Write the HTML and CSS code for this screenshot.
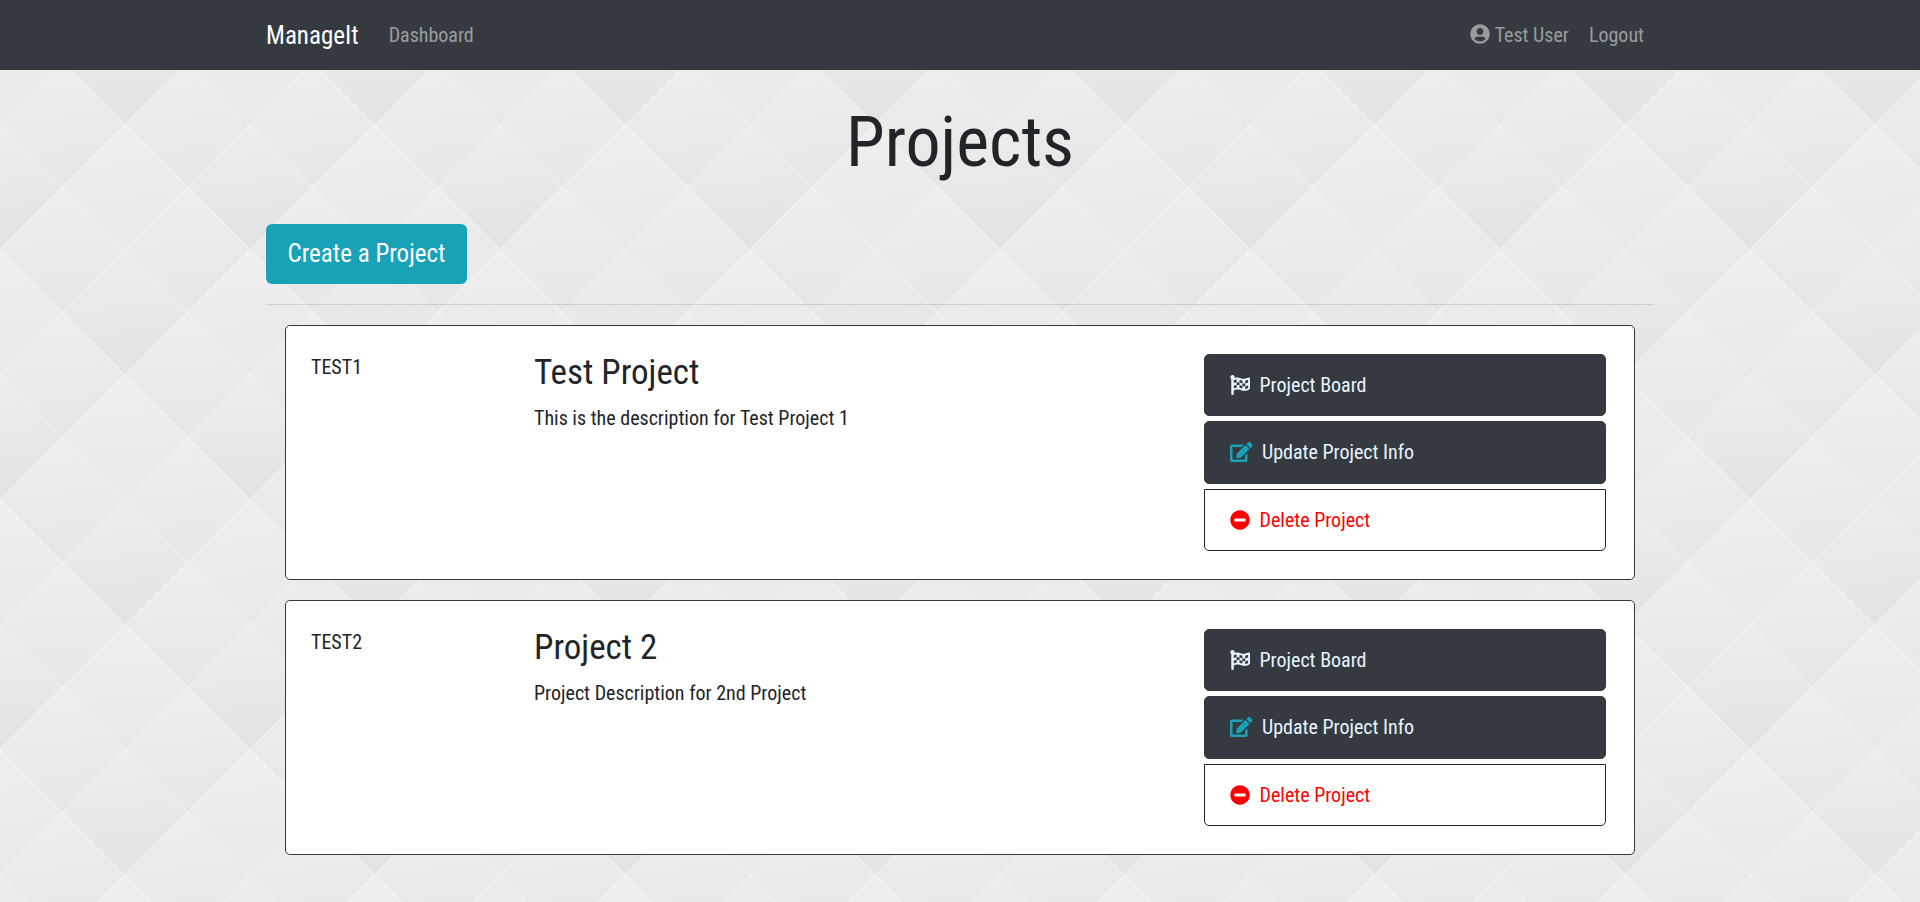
FILE: index.html
```html
<!DOCTYPE html>
<html lang="en">
<head>
<meta charset="utf-8">
<title>ManageIt</title>
<link rel="stylesheet" href="styles.css">
</head>
<body>
<svg class="backdrop" aria-hidden="true">
  <defs>
    <linearGradient id="g1" x1=".45" y1="0" x2=".55" y2="1"><stop offset="0" stop-color="#f0eeee"/><stop offset="1" stop-color="#e8e8e8"/></linearGradient>
    <linearGradient id="g2" x1=".45" y1="0" x2=".55" y2="1"><stop offset="0" stop-color="#eeeeee"/><stop offset="1" stop-color="#e6e6e6"/></linearGradient>
    <linearGradient id="g3" x1=".45" y1="0" x2=".55" y2="1"><stop offset="0" stop-color="#ededed"/><stop offset="1" stop-color="#e3e3e3"/></linearGradient>
    <g id="diamond">
      <path fill="url(#g1)" d="M125 0l62.500 62.500L125 125 62.500 62.500z"/>
      <path fill="url(#g2)" d="M62.500 62.500L125 125l-62.500 62.500L0 125z"/>
      <path fill="url(#g2)" d="M187.500 62.500L250 125l-62.500 62.500L125 125z"/>
      <path fill="url(#g3)" d="M125 125l62.500 62.500L125 250l-62.500-62.500z"/>
      <path class="minor" d="M62.500 62.500l125 125M187.500 62.500l-125 125"/>
      <path class="major" d="M125 0l125 125L125 250 0 125z"/>
    </g>
    <pattern id="tile" width="250" height="250" patternUnits="userSpaceOnUse">
      <use href="#diamond" x="-125" y="0"/><use href="#diamond" x="125" y="0"/>
      <use href="#diamond" x="0" y="-125"/><use href="#diamond" x="0" y="125"/>
    </pattern>
    <symbol id="user" viewBox="0 0 496 512"><path d="M248 8C111 8 0 119 0 256s111 248 248 248 248-111 248-248S385 8 248 8zm0 96c48.600 0 88 39.400 88 88s-39.400 88-88 88-88-39.400-88-88 39.400-88 88-88zm0 344c-58.700 0-111.300-26.600-146.500-68.200 18.800-35.400 55.600-59.800 98.500-59.800 2.400 0 4.800.4 7.100 1.100 13 4.200 26.600 6.900 40.900 6.900 14.300 0 28-2.700 40.900-6.900 2.300-.7 4.700-1.100 7.100-1.100 42.900 0 79.700 24.400 98.500 59.800C359.300 421.400 306.700 448 248 448z"/></symbol>
    <symbol id="flag" viewBox="0 0 512 512"><path d="M243.200 189.900V258c26.100 5.900 49.300 15.600 73.600 22.300v-68.200c-26-5.800-49.400-15.500-73.600-22.200zm223.300-123c-34.300 15.900-76.500 31.900-117 31.900C296 98.800 251.700 64 184.300 64c-25 0-47.300 4.400-68 12 2.800-7.300 4.100-15.200 3.600-23.600C118.100 24 94.800 1.200 66.300 0 34.300-1.300 8 24.300 8 56c0 19 9.500 35.800 24 45.900V488c0 13.300 10.700 24 24 24h16c13.300 0 24-10.700 24-24v-94.400c28.300-12.100 63.600-22.100 114.400-22.100 53.600 0 97.800 34.800 165.200 34.800 48.200 0 86.700-16.300 122.500-40.900 8.700-6 13.800-15.800 13.800-26.400V95.900c.1-23.300-24.200-38.800-45.400-29zM169.600 325.500c-25.800 2.700-50 8.200-73.600 16.600v-70.500c26.200-9.300 47.500-15 73.600-17.400v71.300zM464 191c-23.600 9.800-46.300 19.500-73.600 23.900V286c24.800-3.400 51.400-11.800 73.600-26v70.500c-25.100 16.100-48.500 24.700-73.600 27.100V286c-27 3.700-47.900 1.500-73.600-5.600v67.400c-23.900-7.400-47.300-16.700-73.600-21.300V258c-19.700-4.400-40.800-6.800-73.600-3.800v-70c-22.400 3.100-44.600 10.200-73.600 20.900v-70.500c33.200-12.200 50.100-19.800 73.600-22v71.600c27-3.700 48.400-1.300 73.600 5.700v-67.400c23.700 7.400 47.200 16.700 73.600 21.300v68.400c23.700 5.300 47.600 6.900 73.600 2.700V143c27-4.800 52.300-13.600 73.600-22.500z"/></symbol>
    <symbol id="edit" viewBox="0 0 576 512"><path d="M402.600 83.200l90.200 90.200c3.800 3.800 3.800 10 0 13.800L274.400 405.600l-92.800 10.300c-12.400 1.400-22.900-9.100-21.500-21.500l10.300-92.800L388.800 83.200c3.800-3.800 10-3.800 13.800 0zm162-22.900l-48.800-48.800c-15.200-15.200-39.900-15.200-55.200 0l-35.400 35.400c-3.800 3.800-3.800 10 0 13.800l90.200 90.200c3.800 3.800 10 3.800 13.800 0l35.400-35.400c15.200-15.300 15.200-40 0-55.200zM384 346.200V448H64V128h229.800c3.200 0 6.200-1.300 8.500-3.500l40-40c7.600-7.600 2.200-20.500-8.500-20.500H48C21.500 64 0 85.500 0 112v352c0 26.500 21.500 48 48 48h352c26.500 0 48-21.500 48-48V306.200c0-10.700-12.900-16-20.500-8.500l-40 40c-2.200 2.300-3.500 5.300-3.500 8.500z"/></symbol>
    <symbol id="minus" viewBox="0 0 512 512"><path d="M256 8C119 8 8 119 8 256s111 248 248 248 248-111 248-248S393 8 256 8zM124 296c-6.600 0-12-5.400-12-12v-56c0-6.600 5.400-12 12-12h264c6.600 0 12 5.400 12 12v56c0 6.600-5.400 12-12 12H124z"/></symbol>
  </defs>
  <rect width="100%" height="100%" fill="url(#tile)"/>
</svg>
<nav class="navbar">
  <div class="container navbar-inner">
    <a class="brand">ManageIt</a>
    <a class="nav-link">Dashboard</a>
    <a class="nav-link nav-user"><svg class="icon icon-user"><use href="#user"/></svg>Test User</a>
    <a class="nav-link">Logout</a>
  </div>
</nav>
<main class="container">
  <h1 class="title">Projects</h1>
  <a class="btn-create">Create a Project</a>
  <hr class="divider">
  <div class="projects">
    <article class="card">
      <span class="code">TEST1</span>
      <div class="info"><h3>Test Project</h3><p>This is the description for Test Project 1</p></div>
      <ul class="actions">
        <li class="action"><svg class="icon"><use href="#flag"/></svg>Project Board</li>
        <li class="action update"><svg class="icon icon-edit"><use href="#edit"/></svg>Update Project Info</li>
        <li class="action delete"><svg class="icon"><use href="#minus"/></svg>Delete Project</li>
      </ul>
    </article>
    <article class="card">
      <span class="code">TEST2</span>
      <div class="info"><h3>Project 2</h3><p>Project Description for 2nd Project</p></div>
      <ul class="actions">
        <li class="action"><svg class="icon"><use href="#flag"/></svg>Project Board</li>
        <li class="action update"><svg class="icon icon-edit"><use href="#edit"/></svg>Update Project Info</li>
        <li class="action delete"><svg class="icon"><use href="#minus"/></svg>Delete Project</li>
      </ul>
    </article>
  </div>
</main>
</body>
</html>
```
FILE: styles.css
```css
* { box-sizing: border-box; }
body {
  margin: 0;
  min-height: 902px;
  background: #eaeaea;
  color: #212529;
  font: 20px/30px "Roboto Condensed", Roboto, sans-serif;
  font-stretch: 75%;
}
.backdrop { position: absolute; inset: 0; width: 100%; height: 902px; z-index: -1; }
.minor, .major { fill: none; stroke: #fff; }
.minor { stroke-opacity: .3; stroke-width: 1.2; }
.major { stroke-opacity: .2; stroke-width: 1.6; }
.container { width: 1388px; margin: 0 auto; }
.navbar { height: 70px; background: #343a40; margin-bottom: 30px; }
.navbar-inner { display: flex; align-items: center; height: 100%; }
.brand { color: #fff; font-size: 25px; margin-right: 20px; padding-top: 2px; }
.nav-link { display: flex; align-items: center; padding: 0 10px; color: rgba(255, 255, 255, .5); }
.nav-user { margin-left: auto; }
.icon { flex: none; width: 20px; height: 20px; margin-right: 9.5px; fill: currentColor; }
.icon-user { margin-right: 4.5px; margin-top: -2px; }
.icon-edit { width: 22.5px; color: #17a2b8; }
.title { margin: 0 0 40px; font-size: 70px; line-height: 84px; font-weight: 400; text-align: center; }
.btn-create {
  display: block; width: 201px; height: 60px; border-radius: 6px;
  background: #17a2b8; color: #fff; font-size: 25px; line-height: 60px; text-align: center;
}
.divider { margin: 20px 0; border: 0; border-top: 1px solid rgba(0, 0, 0, .12); }
.projects { display: grid; gap: 20px; padding: 0 19px; }
.card {
  display: grid; grid-template-columns: 223px 1fr 402px; height: 255px;
  padding: 25px 28px 25px 25px; background: #fff; border: 1px solid #343a40; border-radius: 5px;
}
.code { padding-top: 1px; }
.info h3 { margin: 0; padding: 1px 0 9px; font-size: 35px; line-height: 42px; font-weight: 400; }
.info p { margin: 0; }
.actions { display: grid; grid-template-rows: 62px 63px 62px; gap: 5px; margin: 3px 0 0; padding: 0; list-style: none; }
.action {
  display: flex; align-items: center; padding: 0 25px;
  background: #343a40; border: 1px solid #343a40; border-radius: 5px; color: #e8f4ff;
}
.update { padding-bottom: 2px; }
.delete { background: #fff; border-color: #212529; border-radius: 0 0 5px 5px; color: #f00; }
```
